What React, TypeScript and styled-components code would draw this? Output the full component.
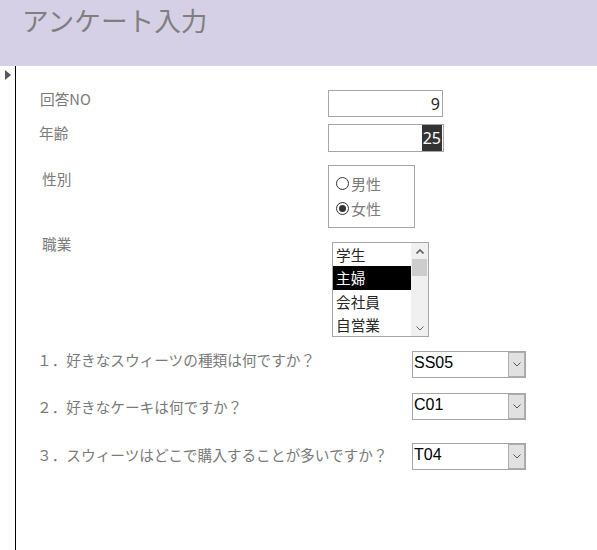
import React from 'react';
import styled, { createGlobalStyle } from 'styled-components';

const GlobalStyle = createGlobalStyle`
  html, body {
    margin: 0;
    padding: 0;
    background: #fff;
  }
  body {
    font-family: "Noto Sans CJK JP", "Noto Sans", sans-serif;
  }
`;

const Header = styled.header`
  height: 66px;
  background: #d6d0e6;
  padding: 4px 0 0 22px;
  box-sizing: border-box;
`;

const Title = styled.h1`
  margin: 0;
  font-size: 26.67px;
  line-height: 32px;
  font-weight: 400;
  color: #7f7f7f;
`;

const Body = styled.div`
  display: flex;
  height: 484px;
`;

const Selector = styled.div`
  width: 16px;
  border-right: 1px solid #000;
  padding: 4px 0 0 5px;
  box-sizing: border-box;
  flex: none;
`;

const Pointer = styled.div`
  width: 0;
  height: 0;
  border-left: 6px solid #595959;
  border-top: 5px solid transparent;
  border-bottom: 5px solid transparent;
`;

const Form = styled.div`
  flex: 1;
  display: flex;
  flex-direction: column;
  padding-top: 24px;
`;

const Row = styled.div<{ $mt: number; $col: number }>`
  display: grid;
  grid-template-columns: ${p => p.$col}px auto;
  align-items: start;
  margin-top: ${p => p.$mt}px;
`;

const Label = styled.div<{ $x: number; $dy: number }>`
  padding-left: ${p => p.$x}px;
  margin-top: ${p => p.$dy}px;
  font-size: 14.67px;
  line-height: 20px;
  color: #7a7a7a;
  white-space: nowrap;
`;

const TextBox = styled.div<{ $w: number; $h: number }>`
  width: ${p => p.$w}px;
  height: ${p => p.$h}px;
  box-sizing: border-box;
  border: 1px solid #a6a6a6;
  display: flex;
  justify-content: flex-end;
  align-items: stretch;
  padding-right: 1px;
  font-family: "Noto Sans", sans-serif;
  font-size: 16px;
  color: #262626;
`;

const Value = styled.span<{ $selected?: boolean }>`
  display: flex;
  align-items: center;
  padding: 0 1px;
  background: ${p => (p.$selected ? '#333' : 'transparent')};
  color: ${p => (p.$selected ? '#fff' : '#262626')};
`;

const RadioGroup = styled.div`
  width: 87px;
  height: 63px;
  box-sizing: border-box;
  border: 1px solid #a6a6a6;
  padding: 5px 0 0 7px;
  display: flex;
  flex-direction: column;
`;

const RadioOption = styled.label`
  display: flex;
  align-items: center;
  height: 25px;
  font-size: 15px;
  color: #7a7a7a;
`;

const RadioCircle = styled.span<{ $checked?: boolean }>`
  width: 13px;
  height: 13px;
  box-sizing: border-box;
  border: 1px solid #333;
  border-radius: 50%;
  background: #fff;
  margin-right: 2px;
  display: flex;
  align-items: center;
  justify-content: center;
  &::after {
    content: '';
    width: 7px;
    height: 7px;
    border-radius: 50%;
    background: ${p => (p.$checked ? '#333' : 'transparent')};
  }
`;

const ListBox = styled.div`
  width: 97px;
  height: 95px;
  box-sizing: border-box;
  border: 1px solid #a6a6a6;
  display: flex;
  margin-left: 4px;
`;

const ListItems = styled.div`
  flex: 1;
  display: flex;
  flex-direction: column;
`;

const ListItem = styled.div<{ $selected?: boolean }>`
  height: 23.5px;
  display: flex;
  align-items: center;
  padding-left: 3px;
  font-size: 14.67px;
  background: ${p => (p.$selected ? '#000' : 'transparent')};
  color: ${p => (p.$selected ? '#fff' : '#262626')};
`;

const ScrollBar = styled.div`
  width: 17px;
  background: #f0f0f0;
  display: flex;
  flex-direction: column;
`;

const ScrollArrow = styled.div`
  height: 16px;
  display: flex;
  align-items: center;
  justify-content: center;
`;

const ScrollTrack = styled.div`
  flex: 1;
  padding: 0 1px;
`;

const Thumb = styled.div`
  height: 17px;
  background: #cdcdcd;
`;

const Combo = styled.div`
  width: 114px;
  height: 27px;
  box-sizing: border-box;
  border: 1px solid #a6a6a6;
  display: flex;
`;

const ComboText = styled.div`
  flex: 1;
  padding-left: 1px;
  font-family: "Liberation Sans", Arial, sans-serif;
  font-size: 16px;
  line-height: 21px;
  color: #000;
`;

const ComboButton = styled.div`
  width: 17px;
  box-sizing: border-box;
  background: #e1e1e1;
  border: 1px solid #adadad;
  display: flex;
  align-items: center;
  justify-content: center;
`;

const Chevron = ({ up, color = '#606060' }: { up?: boolean; color?: string }) => (
  <svg width="8" height="5" viewBox="0 0 8 5">
    <polyline
      points={up ? '0.5,4.5 4,1 7.5,4.5' : '0.5,0.5 4,4 7.5,0.5'}
      fill="none"
      stroke={color}
      strokeWidth={up ? 1.6 : 1}
    />
  </svg>
);

const questions = [
  { mt: 14, dy: -1, text: '１．好きなスウィーツの種類は何ですか？', value: 'SS05' },
  { mt: 15, dy: 4, text: '２．好きなケーキは何ですか？', value: 'C01' },
  { mt: 23, dy: 2, text: '３．スウィーツはどこで購入することが多いですか？', value: 'T04' },
];

const jobs = ['学生', '主婦', '会社員', '自営業'];

export default function App() {
  return (
    <>
      <GlobalStyle />
      <Header>
        <Title>アンケート入力</Title>
      </Header>
      <Body>
        <Selector>
          <Pointer />
        </Selector>
        <Form>
          <Row $mt={0} $col={312}>
            <Label $x={24} $dy={-1}>回答NO</Label>
            <TextBox $w={115} $h={27}>
              <Value>9</Value>
            </TextBox>
          </Row>
          <Row $mt={7} $col={312}>
            <Label $x={23} $dy={-1}>年齢</Label>
            <TextBox $w={116} $h={28}>
              <Value $selected>25</Value>
            </TextBox>
          </Row>
          <Row $mt={13} $col={312}>
            <Label $x={26} $dy={4}>性別</Label>
            <RadioGroup>
              <RadioOption>
                <RadioCircle />
                男性
              </RadioOption>
              <RadioOption>
                <RadioCircle $checked />
                女性
              </RadioOption>
            </RadioGroup>
          </Row>
          <Row $mt={14} $col={312}>
            <Label $x={26} $dy={-8}>職業</Label>
            <ListBox>
              <ListItems>
                {jobs.map(j => (
                  <ListItem key={j} $selected={j === '主婦'}>{j}</ListItem>
                ))}
              </ListItems>
              <ScrollBar>
                <ScrollArrow><Chevron up /></ScrollArrow>
                <ScrollTrack><Thumb /></ScrollTrack>
                <ScrollArrow><Chevron /></ScrollArrow>
              </ScrollBar>
            </ListBox>
          </Row>
          {questions.map(q => (
            <Row key={q.value} $mt={q.mt} $col={396}>
              <Label $x={21} $dy={q.dy}>{q.text}</Label>
              <Combo>
                <ComboText>{q.value}</ComboText>
                <ComboButton><Chevron color="#555" /></ComboButton>
              </Combo>
            </Row>
          ))}
        </Form>
      </Body>
    </>
  );
}
